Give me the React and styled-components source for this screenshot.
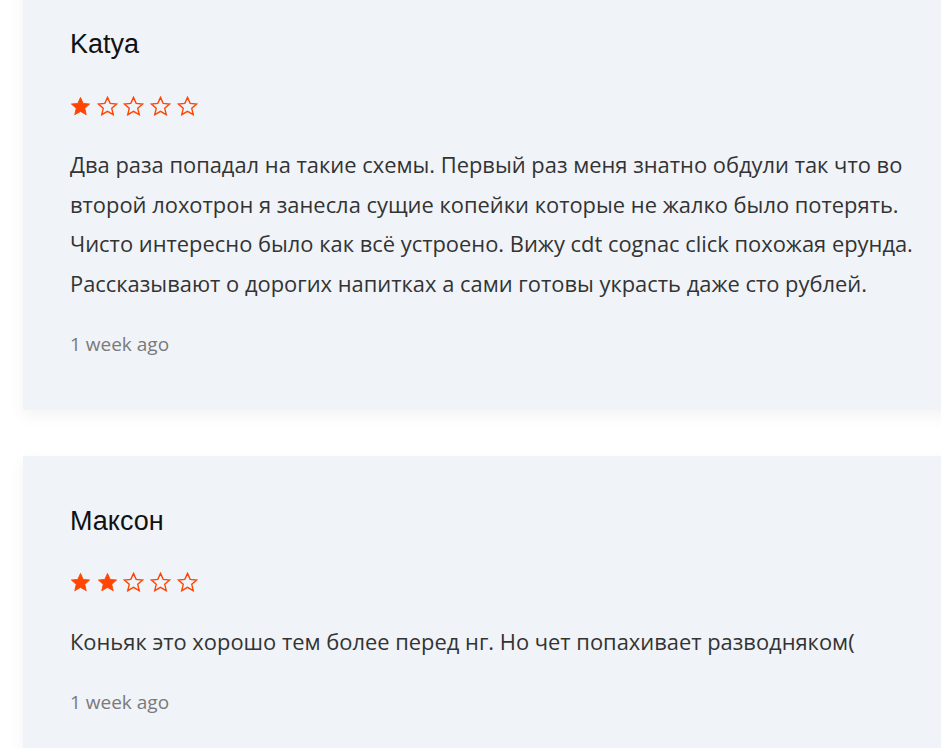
import styled, {createGlobalStyle} from 'styled-components';

const GlobalStyle = createGlobalStyle`
  html, body {
    margin: 0;
    padding: 0;
    background: #ffffff;
    overflow: hidden;
  }
`;

const reviews = [
  {
    id: 1,
    name: 'Katya',
    rating: 1,
    text: 'Два раза попадал на такие схемы. Первый раз меня знатно обдули так что во второй лохотрон я занесла сущие копейки которые не жалко было потерять. Чисто интересно было как всё устроено. Вижу cdt cognac click похожая ерунда. Рассказывают о дорогих напитках а сами готовы украсть даже сто рублей.',
    date: '1 week ago',
  },
  {
    id: 2,
    name: 'Максон',
    rating: 2,
    text: 'Коньяк это хорошо тем более перед нг. Но чет попахивает разводняком(',
    date: '1 week ago',
  },
];

// star outline / filled, drawn the same size so the row stays even
function Star({filled}) {
  return (
    <svg width="21" height="20" viewBox="0 0 24 23">
      <path
        d="M12 1.6l3.1 6.9 7.4.7-5.6 5 1.7 7.3L12 17.7l-6.6 3.8 1.7-7.3-5.6-5 7.4-.7z"
        fill={filled ? '#ff4500' : 'none'}
        stroke="#ff4500"
        strokeWidth={filled ? 1 : 1.6}
        strokeLinejoin="miter"
      />
    </svg>
  );
}

function App() {
  return (
    <>
      <GlobalStyle />
      <List>
        {reviews.map(review => (
          <Card key={review.id}>
            <Name>{review.name}</Name>
            <Stars>
              {[1, 2, 3, 4, 5].map(i => (
                <Star key={i} filled={i <= review.rating} />
              ))}
            </Stars>
            <Text>{review.text}</Text>
            <Date>{review.date}</Date>
          </Card>
        ))}
      </List>
    </>
  );
}

const List = styled.div`
  display: flex;
  flex-direction: column;
  gap: 46px;
  margin-top: -21px;
  padding-left: 23px;
  padding-bottom: 40px;
`;

const Card = styled.div`
  width: 960px;
  box-sizing: border-box;
  padding: 50px 47px 52px 47px;
  background: #f0f3f8;
  box-shadow: 0 6px 14px rgba(120, 90, 90, 0.07);
`;

const Name = styled.h3`
  margin: 0;
  font-family: 'Liberation Sans', Arial, sans-serif;
  font-weight: 400;
  font-size: 27px;
  line-height: 30px;
  color: #111111;
`;

const Stars = styled.div`
  display: flex;
  gap: 5.7px;
  margin-top: 36px;
  height: 21px;
  align-items: center;
`;

const Text = styled.p`
  margin: 29px 0 0;
  max-width: 870px;
  font-family: 'Open Sans', sans-serif;
  font-size: 21.9px;
  line-height: 39.7px;
  color: #333333;
`;

const Date = styled.div`
  margin-top: 27px;
  font-family: 'Open Sans', sans-serif;
  font-size: 19px;
  line-height: 27px;
  color: #7a7a7a;
`;

export default App;
